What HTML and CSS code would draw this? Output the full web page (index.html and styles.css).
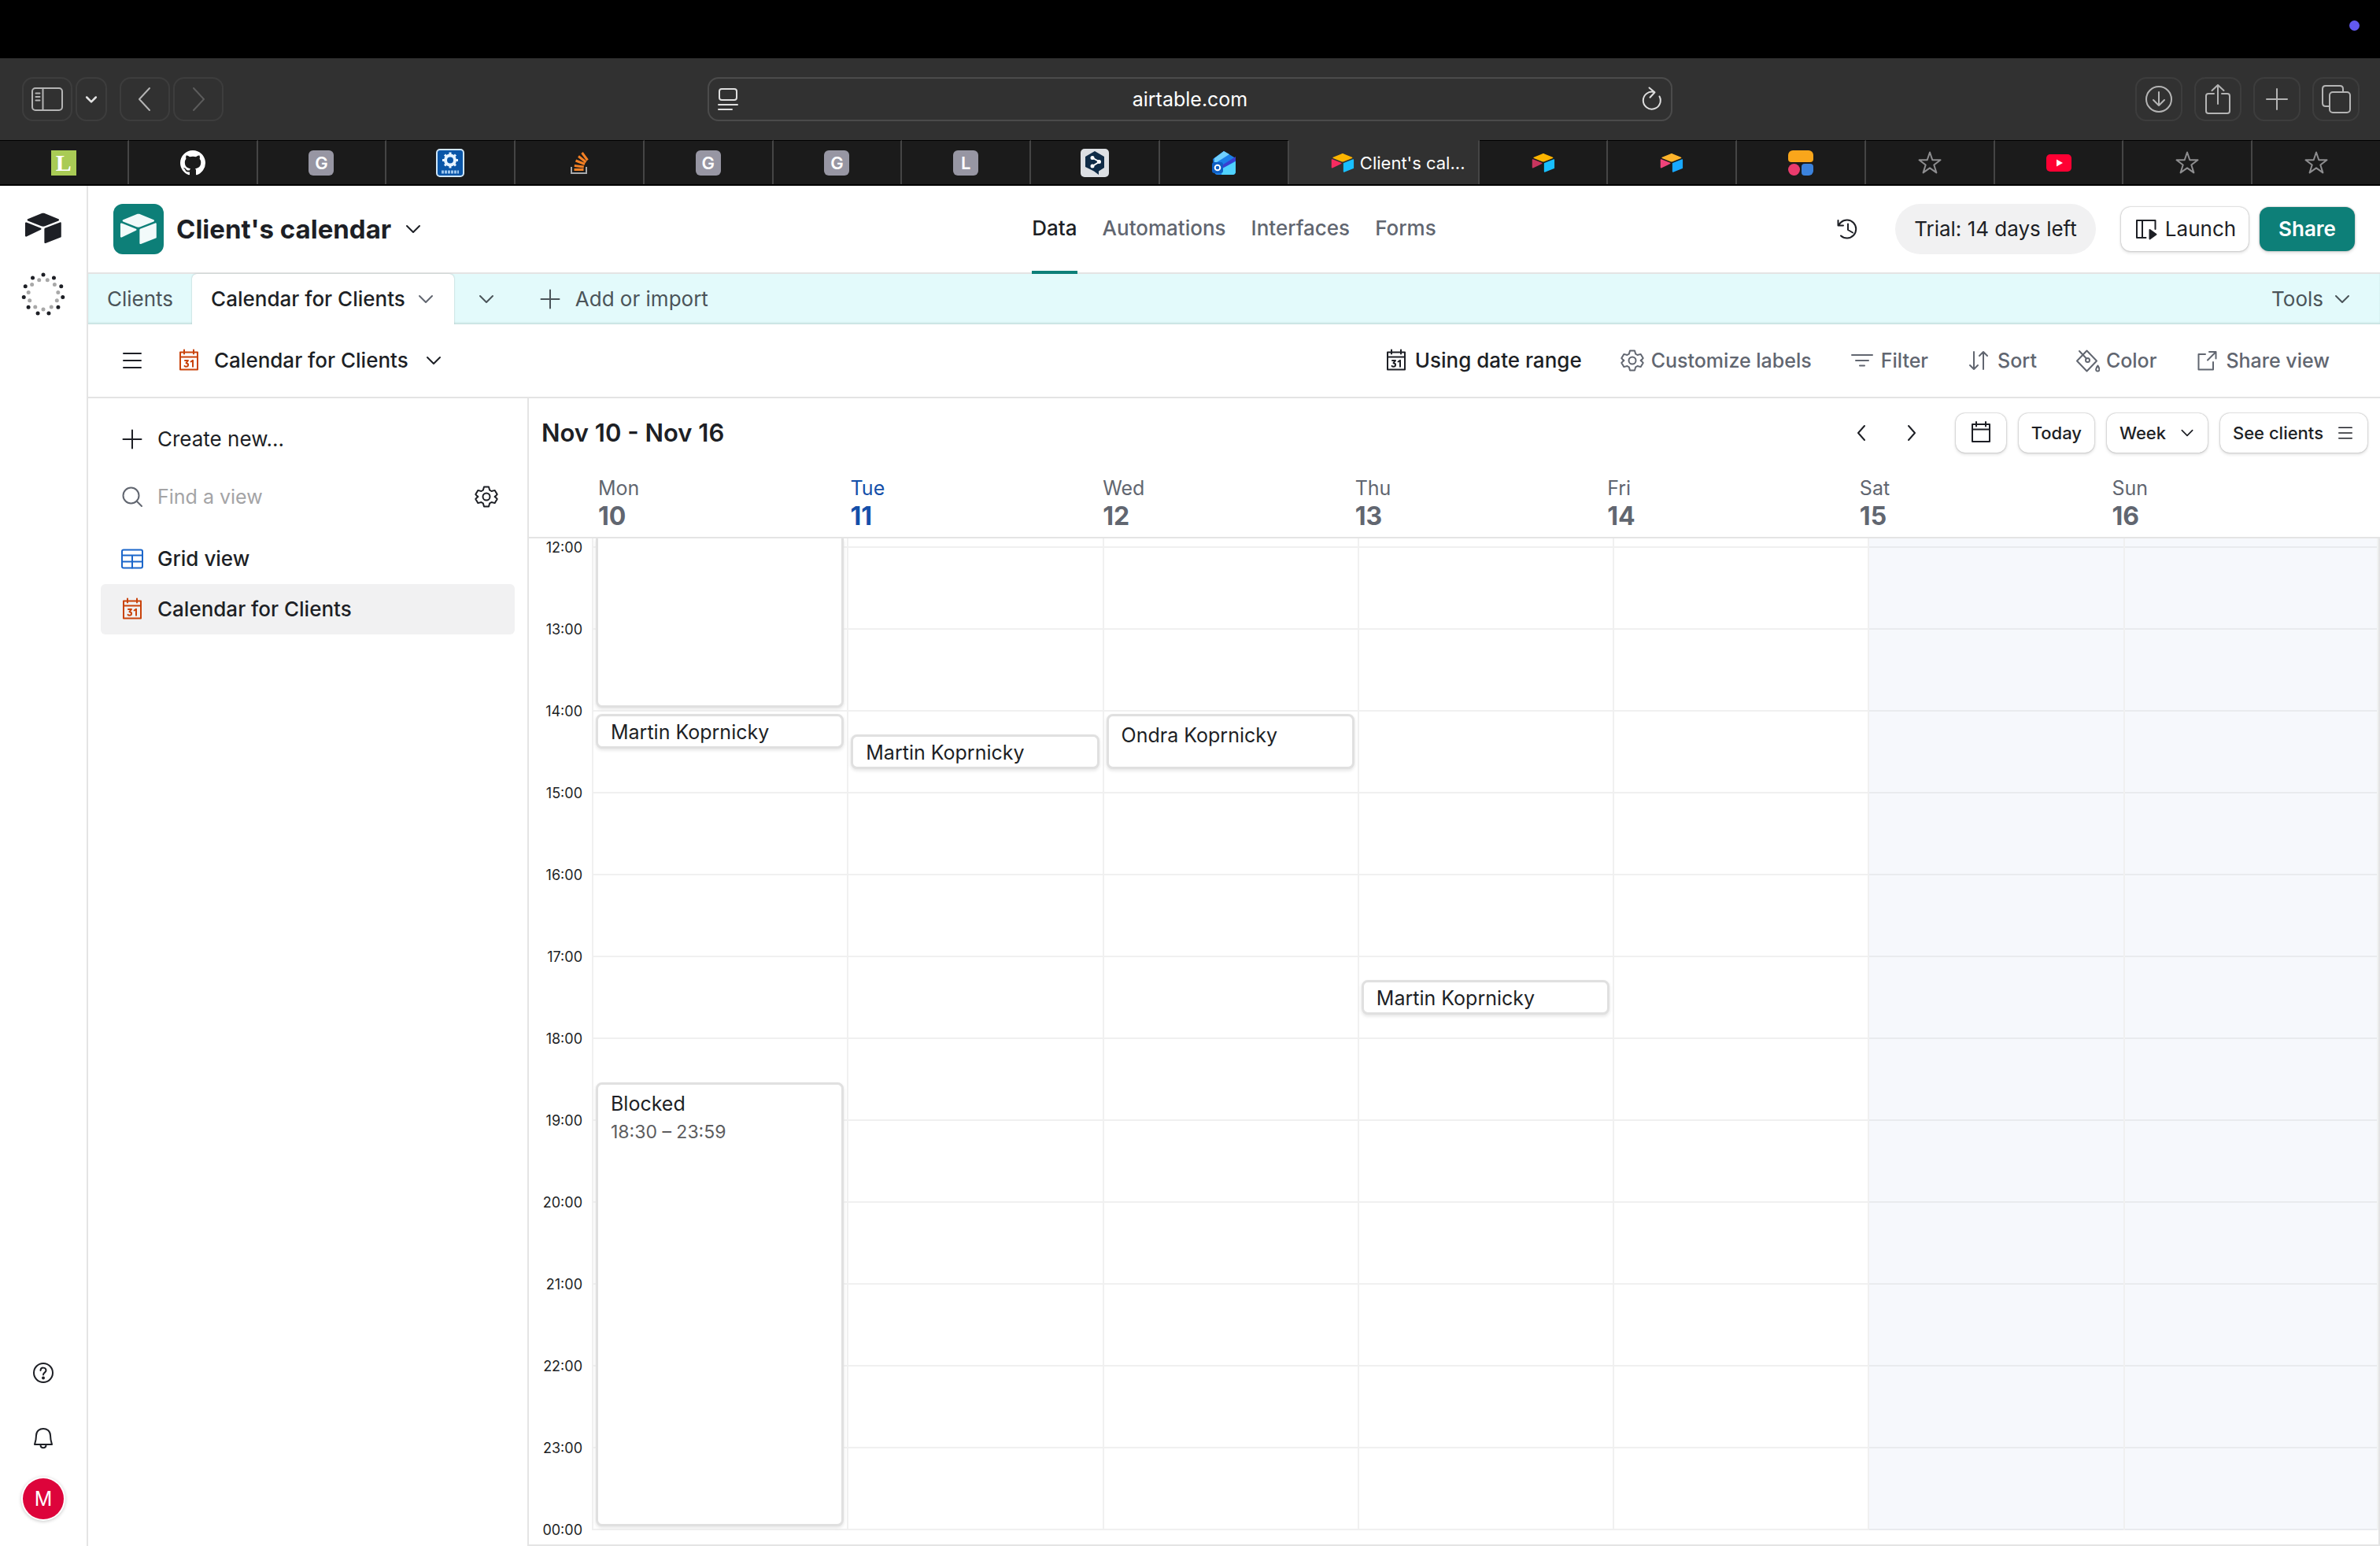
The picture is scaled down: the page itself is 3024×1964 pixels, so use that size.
FILE: index.html
```html
<!DOCTYPE html>
<html lang="en">

<head>
  <meta charset="utf-8">
  <title>Client's calendar: Calendar for Clients</title>
  <link rel="stylesheet" href="styles.css">
</head>

<body>

  <!-- icon set -->
  <svg class="sprite" aria-hidden="true">
    <symbol id="chevron-down" viewBox="0 0 24 24"><path d="M4 8l8 8 8-8"/></symbol>
    <symbol id="plus" viewBox="0 0 32 32"><path d="M16 4.500v23M4.500 16h23"/></symbol>
    <symbol id="menu" viewBox="0 0 32 32"><path d="M5 7h22M5 16h22M5 25h22"/></symbol>
    <symbol id="calendar-31" viewBox="0 0 32 32">
      <path d="M5 5.500h22v22H5zM5 11.500h22M10 2.500v5M22 2.500v5"/>
      <path d="M11 16h4l-2.500 3.200c3.600.2 3.200 4.600 0 4.600-.9 0-1.500-.3-2-.9M18.500 17.500l2.500-1.700v8"/>
    </symbol>
    <symbol id="calendar" viewBox="0 0 32 32"><path d="M5 5h22v22H5zM5 11.500h22M10 2v5.500M22 2v5.500"/></symbol>
    <symbol id="gear" viewBox="0 0 32 32">
      <circle cx="16" cy="16" r="4.500"/>
      <path d="M13 3.500h6l1.200 4.200 2.300 1.300 4.200-1.100 3 5.200-3 3.100v-.400l3 3.100-3 5.200-4.200-1.100-2.300 1.300-1.200 4.200h-6l-1.200-4.200-2.300-1.300-4.200 1.100-3-5.200 3-3.100v.400l-3-3.100 3-5.200 4.200 1.100 2.300-1.300z"/>
    </symbol>
    <symbol id="search" viewBox="0 0 32 32"><circle cx="14.500" cy="14.500" r="10"/><path d="M22 22l6 6"/></symbol>
    <symbol id="grid" viewBox="0 0 32 32"><rect x="3" y="4.500" width="26" height="23" rx="2"/><path d="M3 11.500h26M3 19.500h26M16 11.500v16"/></symbol>
    <symbol id="filter" viewBox="0 0 32 32"><path d="M3 9h26M8 16h16M13 22.500h6"/></symbol>
    <symbol id="sort" viewBox="0 0 32 32"><path d="M10 5v22M5 22l5 5 5-5M22 27V5M17 10l5-5 5 5"/></symbol>
    <symbol id="paint" viewBox="0 0 32 32">
      <path d="M15.500 3.500L28 16.500 15.500 29.500 3 16.500zM6 4l9 9.500"/>
      <circle cx="16.500" cy="15.500" r="2.500"/>
      <path d="M29.500 22.500c2 3 3 7-.200 7s-2.500-4 .200-7z"/>
    </symbol>
    <symbol id="share-out" viewBox="0 0 32 32"><path d="M14 8H5.500v19.500H24V18M19 5h8.500v8.500M27 5.500L17 15.500"/></symbol>
    <symbol id="history" viewBox="0 0 32 32"><path d="M7 24.500a11.500 11.500 0 1 0 0-17L3.500 11.500M3.500 5v6.500H10M16 9.500V17l6 3.500"/></symbol>
    <symbol id="launch" viewBox="0 0 32 32"><path d="M15.500 27H4V5h23.500v11M11 5v22"/><path class="solid" d="M20.500 17l8 5.700-8 5.800z"/></symbol>
    <symbol id="help" viewBox="0 0 32 32"><circle cx="16" cy="16" r="12"/><path d="M12.500 13c.2-4.600 7-4.400 7 0 0 2.600-3.500 2.700-3.500 5.500"/><circle class="solid" cx="16" cy="22.500" r="1"/></symbol>
    <symbol id="bell" viewBox="0 0 32 32"><path d="M7 12.500c.3-11.500 17.700-11.500 18 0 0 5 .8 7.500 2 11.500H5c1.200-4 2-6.500 2-11.500zM12.500 24.500c0 5 7 5 7 0"/></symbol>
    <symbol id="star" viewBox="0 0 32 32"><path d="M16 2.500l3.300 9.800h10.200l-8.200 6.200 3.100 9.900-8.400-6-8.400 6 3.100-9.900-8.200-6.200h10.200z"/></symbol>
    <symbol id="box-top" viewBox="0 0 200 170"><path d="M90 12.400L24 39.700c-3.600 1.500-3.600 6.700.1 8.200l66.300 26.200c5.800 2.300 12.300 2.300 18.100 0l66.200-26.200c3.700-1.500 3.700-6.700.1-8.200l-66-27.300c-6-2.500-12.700-2.500-18.800 0z"/></symbol>
    <symbol id="box-right" viewBox="0 0 200 170"><path d="M105.300 88.500v65.600c0 3.100 3.200 5.200 6.100 4.100l73.800-28.700c1.700-.6 2.800-2.300 2.800-4.100V59.800c0-3.100-3.200-5.200-6.100-4.100l-73.800 28.700c-1.700.6-2.800 2.300-2.800 4.100z"/></symbol>
    <symbol id="box-left" viewBox="0 0 200 170"><path d="M88.100 91.800l-24.100 11.700-46.300 22.200c-2.900 1.400-6.700-.8-6.700-4V60.100c0-1.200.6-2.200 1.500-3 1.400-1.300 3.400-1.800 5.100-1.100l70.100 27.800c3.600 1.400 3.900 6.400.4 8z"/></symbol>
  </svg>

  <!-- browser window -->
  <div class="menubar"><span class="recording"></span></div>

  <div class="browser">
    <div class="browser-group">
      <button class="chrome-btn" aria-label="Sidebar"><svg class="icon-lg" viewBox="0 0 40 32"><rect x="1" y="2" width="38" height="28" rx="4"/><path d="M14.500 2v28M5.500 8.500h5M5.500 13h5M5.500 17.500h5"/></svg></button>
      <button class="chrome-btn narrow" aria-label="Tab groups"><svg class="icon-xs bold" viewBox="0 0 24 24"><path d="M5 9l7 7 7-7"/></svg></button>
      <button class="chrome-btn spaced" aria-label="Back"><svg class="icon" viewBox="0 0 32 32"><path d="M22 2L9 16l13 14"/></svg></button>
      <button class="chrome-btn off" aria-label="Forward"><svg class="icon" viewBox="0 0 32 32"><path d="M10 2l13 14-13 14"/></svg></button>
    </div>
    <div class="address">
      <svg class="icon" viewBox="0 0 32 32"><rect x="5" y="3" width="22" height="14" rx="3"/><path d="M4 23h24M4 29h17"/></svg>
      <input type="text" value="airtable.com" aria-label="Address">
      <button aria-label="Reload"><svg class="icon" viewBox="0 0 32 32"><path d="M25.500 12.500a11 11 0 1 1-7-5.500M12.500 1.500l7 5.700-6 6.500"/></svg></button>
    </div>
    <div class="browser-group end">
      <button class="chrome-btn" aria-label="Downloads"><svg class="icon-lg" viewBox="0 0 40 36"><circle cx="20" cy="18" r="16"/><path d="M20 9v17M13 19l7 7 7-7"/></svg></button>
      <button class="chrome-btn" aria-label="Share page"><svg class="icon-lg" viewBox="0 0 40 40"><path d="M15 13H8c-2 0-3 1-3 3v19c0 2 1 3 3 3h24c2 0 3-1 3-3V16c0-2-1-3-3-3h-7M20 26V2M12.500 9L20 2l7.500 7"/></svg></button>
      <button class="chrome-btn" aria-label="New tab"><svg class="icon" viewBox="0 0 32 32"><path d="M16 3v26M3 16h26"/></svg></button>
      <button class="chrome-btn" aria-label="All tabs"><svg class="icon-lg" viewBox="0 0 40 40"><rect x="12" y="11" width="26" height="26" rx="4"/><path d="M12 29H7c-3 0-4-1-4-4V7c0-3 1-4 4-4h18c3 0 4 1 4 4v4"/></svg></button>
    </div>
  </div>

  <div class="tabstrip">
    <a href="#" class="tab"><span class="fav lime">L</span></a>
    <a href="#" class="tab"><svg class="fav" viewBox="0 0 16 16"><path fill="#fff" d="M8 0C3.580 0 0 3.580 0 8c0 3.540 2.290 6.530 5.470 7.590.4.070.55-.17.55-.38 0-.19-.01-.82-.01-1.490-2.010.37-2.530-.49-2.690-.94-.09-.23-.48-.94-.82-1.130-.28-.15-.68-.52-.01-.53.63-.01 1.080.58 1.230.82.72 1.210 1.870.87 2.330.66.07-.52.28-.87.51-1.070-1.780-.2-3.640-.89-3.640-3.950 0-.87.31-1.590.82-2.150-.08-.2-.36-1.020.08-2.120 0 0 .67-.21 2.200.82.64-.18 1.320-.27 2-.27s1.360.09 2 .27c1.530-1.040 2.200-.82 2.200-.82.44 1.100.16 1.920.08 2.120.51.56.82 1.270.82 2.150 0 3.070-1.870 3.750-3.650 3.950.29.25.54.73.54 1.480 0 1.070-.01 1.930-.01 2.200 0 .21.15.46.55.38A8.010 8.010 0 0 0 16 8c0-4.420-3.580-8-8-8z"/></svg></a>
    <a href="#" class="tab"><span class="fav">G</span></a>
    <a href="#" class="tab"><svg class="fav-lg" viewBox="0 0 36 36"><rect x="1" y="1" width="34" height="34" rx="4" fill="#0a56a8" stroke="#cfe6f8" stroke-width="2"/><circle cx="18" cy="14.500" r="6" fill="none" stroke="#e6f3ff" stroke-width="4"/><path stroke="#e6f3ff" stroke-width="3" d="M18 4.500v3M18 21.500v3M8 14.500h3M25 14.500h3M11 7.500l2 2M23 19.500l2 2M25 7.500l-2 2M13 19.500l-2 2"/><path stroke="#9cc6ee" stroke-width="4" stroke-dasharray="3 1" d="M7 29.500h22"/></svg></a>
    <a href="#" class="tab"><svg class="fav" viewBox="0 0 32 32" fill="none" stroke-width="3"><path stroke="#a7a9ac" stroke-width="2" d="M6 21v8h19v-8"/><path stroke="#f48024" d="M9.500 24.500h12M9.800 19.500l12 1.500M11.500 13l11.500 4.500M15 7.500l9.500 7.500M19.500 3l7 9.500"/></svg></a>
    <a href="#" class="tab"><span class="fav">G</span></a>
    <a href="#" class="tab"><span class="fav">G</span></a>
    <a href="#" class="tab"><span class="fav">L</span></a>
    <a href="#" class="tab"><svg class="fav-lg" viewBox="0 0 36 36"><rect width="36" height="36" rx="5" fill="#dcdfe3"/><path fill="#0f2b46" d="M18 3l12 7v14l-7 4.500V33l-6-4.500L6 23V10z"/><path stroke="#fff" stroke-width="2" d="M15 11.500l9 5-9 5.500" fill="none"/><g fill="#fff"><circle cx="15" cy="11.500" r="2.500"/><circle cx="23.500" cy="16.500" r="2.500"/><circle cx="15" cy="22" r="2.500"/></g></svg></a>
    <a href="#" class="tab"><svg class="fav" viewBox="0 0 32 32"><path fill="#1b7fe8" d="M2 11L16 1l15 9v17a4 4 0 0 1-4 4H8a4 4 0 0 1-4-4z"/><path fill="#6fd0ff" d="M4 10L16 1l7 4L4 17z"/><path fill="#3a3fd0" d="M12 20L31 8v5L14 24z"/><path fill="#4fd2ff" d="M14 23l17-9v13a4 4 0 0 1-4 4H13z"/><rect x="1" y="15" width="14" height="14" rx="3" fill="#0f5fc4"/><circle cx="8" cy="22" r="3.300" fill="none" stroke="#fff" stroke-width="2"/></svg></a>
    <a href="#" class="tab active"><svg class="fav"><use href="#box-top" fill="#fcb400"/><use href="#box-right" fill="#18bfff"/><use href="#box-left" fill="#f82b60"/></svg>Client's cal...</a>
    <a href="#" class="tab"><svg class="fav"><use href="#box-top" fill="#fcb400"/><use href="#box-right" fill="#18bfff"/><use href="#box-left" fill="#c8355e"/></svg></a>
    <a href="#" class="tab"><svg class="fav"><use href="#box-top" fill="#fdb32b"/><use href="#box-right" fill="#18a8ff"/><use href="#box-left" fill="#f0437a"/></svg></a>
    <a href="#" class="tab"><svg class="fav" viewBox="0 0 32 32"><rect width="32" height="15" rx="4" fill="#f9a61b"/><circle cx="7.500" cy="24.500" r="7.500" fill="#ea3b6d"/><rect x="17" y="17" width="15" height="15" rx="4" fill="#3b82dc"/></svg></a>
    <a href="#" class="tab"><svg class="icon faint"><use href="#star"/></svg></a>
    <a href="#" class="tab"><svg class="fav" viewBox="0 0 32 32"><rect y="5" width="32" height="22" rx="5" fill="#ff0033"/><path fill="#fff" d="M13 11.500v9l8-4.500z"/></svg></a>
    <a href="#" class="tab"><svg class="icon faint"><use href="#star"/></svg></a>
    <a href="#" class="tab"><svg class="icon faint"><use href="#star"/></svg></a>
  </div>

  <div class="app">

    <nav class="rail">
      <a href="#" class="home" aria-label="Home"><svg class="logo"><use href="#box-top"/><use href="#box-right"/><use href="#box-left"/></svg></a>
      <svg class="loader" viewBox="0 0 56 56">
        <circle class="dots" cx="28" cy="28" r="25" pathLength="110" transform="rotate(-90 28 28)"/>
        <circle class="dots inner" cx="28" cy="28" r="19" pathLength="110" transform="rotate(90 28 28)"/>
      </svg>
      <div class="rail-bottom">
        <button aria-label="Help"><svg class="icon"><use href="#help"/></svg></button>
        <button aria-label="Notifications"><svg class="icon"><use href="#bell"/></svg></button>
        <button class="avatar">M</button>
      </div>
    </nav>

    <main class="main">

      <header class="topbar">
        <div class="base">
          <span class="base-icon"><svg class="logo"><use href="#box-top"/><use href="#box-right"/><use href="#box-left"/></svg></span>
          <h1>Client's calendar</h1>
          <button aria-label="Base menu"><svg class="icon-sm"><use href="#chevron-down"/></svg></button>
        </div>
        <nav class="sections">
          <a href="#" class="current">Data</a>
          <a href="#">Automations</a>
          <a href="#">Interfaces</a>
          <a href="#">Forms</a>
        </nav>
        <div class="actions">
          <button class="history" aria-label="History"><svg class="icon"><use href="#history"/></svg></button>
          <button class="trial">Trial: 14 days left</button>
          <button class="launch"><svg class="icon"><use href="#launch"/></svg>Launch</button>
          <button class="share">Share</button>
        </div>
      </header>

      <div class="tables">
        <a href="#" class="table-tab">Clients</a>
        <a href="#" class="table-tab open">Calendar for Clients <svg class="icon-sm"><use href="#chevron-down"/></svg></a>
        <button class="all-tables" aria-label="All tables"><svg class="icon-sm"><use href="#chevron-down"/></svg></button>
        <button class="add-table"><svg class="icon"><use href="#plus"/></svg>Add or import</button>
        <button class="tools">Tools <svg class="icon-sm"><use href="#chevron-down"/></svg></button>
      </div>

      <div class="viewbar">
        <button aria-label="Toggle sidebar"><svg class="icon"><use href="#menu"/></svg></button>
        <button class="view-name"><svg class="icon orange"><use href="#calendar-31"/></svg><span>Calendar for Clients</span><svg class="icon-sm"><use href="#chevron-down"/></svg></button>
        <div class="view-tools">
          <button class="dark"><svg class="icon"><use href="#calendar-31"/></svg>Using date range</button>
          <button><svg class="icon"><use href="#gear"/></svg>Customize labels</button>
          <button><svg class="icon"><use href="#filter"/></svg>Filter</button>
          <button><svg class="icon"><use href="#sort"/></svg>Sort</button>
          <button><svg class="icon"><use href="#paint"/></svg>Color</button>
          <button><svg class="icon"><use href="#share-out"/></svg>Share view</button>
        </div>
      </div>

      <div class="content">

        <aside class="sidebar">
          <button class="row create"><svg class="icon"><use href="#plus"/></svg>Create new...</button>
          <div class="row find">
            <label for="find"><svg class="icon"><use href="#search"/></svg></label>
            <input type="text" id="find" placeholder="Find a view" aria-label="Find a view">
            <button aria-label="View settings"><svg class="icon"><use href="#gear"/></svg></button>
          </div>
          <a href="#" class="row view"><svg class="icon blue"><use href="#grid"/></svg>Grid view</a>
          <a href="#" class="row view selected"><svg class="icon orange"><use href="#calendar-31"/></svg>Calendar for Clients</a>
        </aside>

        <section class="calendar">
          <div class="cal-bar">
            <h2>Nov 10 - Nov 16</h2>
            <div class="arrows">
              <button aria-label="Previous week"><svg class="icon-sm" viewBox="0 0 24 24"><path d="M16 3l-8 9 8 9"/></svg></button>
              <button aria-label="Next week"><svg class="icon-sm" viewBox="0 0 24 24"><path d="M8 3l8 9-8 9"/></svg></button>
            </div>
            <button class="box" aria-label="Pick a date"><svg class="icon"><use href="#calendar"/></svg></button>
            <button class="box">Today</button>
            <div class="box select">
              <select aria-label="Range">
                <option>Day</option>
                <option selected>Week</option>
              </select>
              <svg class="icon-xs"><use href="#chevron-down"/></svg>
            </div>
            <button class="box">See clients <svg class="icon-sm"><use href="#menu"/></svg></button>
          </div>

          <div class="days">
            <div class="day">Mon <b>10</b></div>
            <div class="day today">Tue <b>11</b></div>
            <div class="day">Wed <b>12</b></div>
            <div class="day">Thu <b>13</b></div>
            <div class="day">Fri <b>14</b></div>
            <div class="day">Sat <b>15</b></div>
            <div class="day">Sun <b>16</b></div>
          </div>

          <div class="week">
            <div class="hours">
              <span>12:00</span>
              <span>13:00</span>
              <span>14:00</span>
              <span>15:00</span>
              <span>16:00</span>
              <span>17:00</span>
              <span>18:00</span>
              <span>19:00</span>
              <span>20:00</span>
              <span>21:00</span>
              <span>22:00</span>
              <span>23:00</span>
              <span>00:00</span>
            </div>
            <!-- row 2 is 12:00, one row for each quarter of an hour -->
            <div class="col">
              <div class="event cut" style="grid-row: 1 / 10"></div>
              <div class="event short" style="grid-row: 10 / 12">Martin Koprnicky</div>
              <div class="event" style="grid-row: 28 / 50">Blocked<small>18:30 – 23:59</small></div>
            </div>
            <div class="col">
              <div class="event short" style="grid-row: 11 / 13">Martin Koprnicky</div>
            </div>
            <div class="col">
              <div class="event" style="grid-row: 10 / 13">Ondra Koprnicky</div>
            </div>
            <div class="col">
              <div class="event short" style="grid-row: 23 / 25">Martin Koprnicky</div>
            </div>
            <div class="col"></div>
            <div class="col weekend"></div>
            <div class="col weekend"></div>
          </div>
        </section>

      </div>
    </main>
  </div>

</body>

</html>
```
FILE: styles.css
```css
* {
  box-sizing: border-box;
}

body {
  margin: 0;
  min-height: 100vh;
  display: flex;
  flex-direction: column;
  font-family: Inter, "Liberation Sans", sans-serif;
  font-size: 26px;
  line-height: 36px;
  color: #1d1f25;
  background: #fff;
}

button,
input,
select {
  font: inherit;
  color: inherit;
  background: none;
  border: none;
  padding: 0;
  margin: 0;
}

button {
  display: flex;
  align-items: center;
  justify-content: center;
  white-space: nowrap;
  cursor: pointer;
}

a {
  color: inherit;
  text-decoration: none;
}

h1,
h2 {
  margin: 0;
}

/* icons */

.sprite {
  display: none;
}

.icon,
.icon-sm,
.icon-xs,
.icon-lg {
  width: 32px;
  height: 32px;
  flex: none;
  fill: none;
  stroke: currentColor;
  stroke-width: 2;
  stroke-linecap: round;
  stroke-linejoin: round;
}

.icon-sm {
  width: 24px;
  height: 24px;
}

.icon-xs {
  width: 20px;
  height: 20px;
}

.icon-lg {
  width: 40px;
  height: 40px;
}

.solid {
  fill: currentColor;
}

.bold {
  stroke-width: 3;
}

.blue {
  color: #1b66ca;
}

.orange {
  color: #c9430b;
}

.faint {
  color: #8e8e90;
}

.logo {
  width: 52px;
  height: 44px;
  fill: currentColor;
}

/* browser window */

.menubar {
  height: 74px;
  padding: 0 26px;
  display: flex;
  align-items: center;
  justify-content: flex-end;
  background: #000;
}

.recording {
  width: 13px;
  height: 13px;
  margin-bottom: 10px;
  border-radius: 50%;
  background: #6259f0;
}

.browser {
  height: 104px;
  padding: 0 24px;
  display: grid;
  grid-template-columns: 5fr 7fr 5fr;
  align-items: center;
  background: #313131;
  color: #b4b4b4;
}

.browser-group {
  display: flex;
  gap: 4px;
  padding-left: 4px;
}

.browser-group.end {
  justify-content: flex-end;
  gap: 15px;
  padding-right: 2px;
}

.chrome-btn {
  width: 64px;
  height: 56px;
  border: 2px solid #3d3d3d;
  border-radius: 14px;
}

.end .chrome-btn {
  width: 60px;
}

.chrome-btn.narrow {
  width: 40px;
  color: #e4e4e4;
}

.chrome-btn.spaced {
  margin-left: 12px;
}

.chrome-btn.off {
  color: #5c5c5c;
}

.address {
  height: 56px;
  padding: 0 8px;
  display: flex;
  align-items: center;
  border: 2px solid #4b4b4b;
  border-radius: 14px;
  color: #dedede;
}

.address input {
  flex: 1;
  text-align: center;
  font-size: 25px;
  color: #fff;
}

.tabstrip {
  height: 58px;
  display: flex;
  background: #1b1b1b;
  border-bottom: 2px solid #000;
}

.tab {
  flex: 1;
  display: flex;
  align-items: center;
  justify-content: center;
  border-top: 1px solid #000;
  border-right: 2px solid #454545;
}

.tab:last-child {
  border-right: none;
}

.tab.active {
  flex: none;
  width: 242px;
  gap: 6px;
  padding-left: 36px;
  background: #313131;
  border-top-color: #313131;
  color: #fff;
  font-size: 22px;
}

.fav {
  width: 32px;
  height: 32px;
  border-radius: 6px;
  text-align: center;
  line-height: 32px;
  font-size: 22px;
  font-weight: 600;
  color: #fff;
}

span.fav {
  background: #9796a3;
}

.fav-lg {
  width: 36px;
  height: 36px;
}

.fav.lime {
  background: #a9cb55;
  border-radius: 0;
  font-family: "Liberation Serif", serif;
  font-size: 30px;
}

/* left rail */

.app {
  flex: 1;
  display: flex;
}

.rail {
  width: 112px;
  padding: 32px 0 34px;
  display: flex;
  flex-direction: column;
  align-items: center;
  gap: 34px;
  border-right: 2px solid #e4e4e4;
}

.home {
  height: 44px;
}

.loader {
  width: 56px;
  height: 56px;
}

.dots {
  fill: none;
  stroke: #1d1f25;
  stroke-width: 5;
  stroke-linecap: round;
  stroke-dasharray: 0 10;
}

.dots.inner {
  stroke: #a8a8a8;
}

.rail-bottom {
  margin-top: auto;
  display: flex;
  flex-direction: column;
  align-items: center;
  gap: 19px;
}

.rail-bottom button {
  width: 64px;
  height: 64px;
}

.rail-bottom .avatar {
  width: 52px;
  height: 52px;
  border-radius: 50%;
  background: #dd043b;
  color: #fff;
  font-size: 25px;
  box-shadow: 0 0 0 2px #fff, 0 1px 4px 2px #c8c8c8;
}

/* top bar */

.main {
  flex: 1;
  min-width: 0;
  display: flex;
  flex-direction: column;
}

.topbar {
  height: 112px;
  padding: 0 32px;
  display: grid;
  grid-template-columns: 1fr auto 1fr;
  align-items: center;
  border-bottom: 2px solid #e4e4e4;
}

.base {
  display: flex;
  align-items: center;
  gap: 16px;
}

.base-icon {
  width: 64px;
  height: 64px;
  display: flex;
  align-items: center;
  justify-content: center;
  border-radius: 12px;
  background: #0d7f78;
  color: #f2fafa;
}

.base h1 {
  font-size: 33px;
  font-weight: 700;
}

.sections {
  align-self: stretch;
  display: flex;
  gap: 32px;
  font-weight: 500;
  color: #616670;
}

.sections a {
  display: flex;
  align-items: center;
  margin-bottom: -2px;
  border-bottom: 4px solid transparent;
}

.sections .current {
  color: #1d1f25;
  border-bottom-color: #0d7f78;
}

.actions {
  display: flex;
  align-items: center;
  justify-content: flex-end;
}

.history {
  margin-right: 44px;
}

.trial {
  height: 64px;
  padding: 0 24px;
  margin-right: 32px;
  border-radius: 32px;
  background: #f1f1f2;
}

.launch,
.share {
  height: 56px;
  border-radius: 12px;
  box-shadow: 0 0 2px #9a9a9a, 0 2px 4px #dcdcdc;
}

.launch {
  gap: 8px;
  padding: 0 16px;
  margin-right: 14px;
}

.share {
  padding: 0 24px;
  background: #0d7f78;
  color: #fff;
  font-weight: 600;
}

/* table tabs */

.tables {
  height: 64px;
  display: flex;
  background: #e3fafb;
  box-shadow: inset 0 -2px 2px #c8e2e1;
  color: #4b5459;
}

.table-tab {
  padding: 0 24px;
  display: flex;
  align-items: center;
  gap: 14px;
}

.table-tab.open {
  background: #fff;
  color: #1d1f25;
  font-weight: 500;
  border-radius: 6px 6px 0 0;
  box-shadow: 0 0 2px #9fb5b4;
  clip-path: inset(-2px -2px 0);
}

.table-tab.open .icon-sm {
  color: #616670;
}

.all-tables {
  width: 82px;
}

.add-table {
  gap: 16px;
  margin-left: 24px;
}

.tools {
  gap: 12px;
  margin-left: auto;
  padding-right: 36px;
}

/* view bar */

.viewbar {
  height: 94px;
  padding: 0 64px 0 40px;
  display: flex;
  align-items: center;
  border-bottom: 2px solid #e4e4e4;
}

.view-name {
  gap: 16px;
  margin-left: 40px;
  font-weight: 500;
}

.view-name span {
  padding-right: 4px;
}

.view-tools {
  margin-left: auto;
  display: flex;
  gap: 48px;
  font-size: 25px;
  font-weight: 500;
  color: #616670;
}

.view-tools button {
  gap: 8px;
}

.view-tools .dark {
  font-size: 26px;
  color: #1d1f25;
}

/* sidebar */

.content {
  flex: 1;
  display: flex;
}

.sidebar {
  width: 560px;
  padding: 16px;
  border-right: 2px solid #e4e4e4;
}

.row {
  width: 100%;
  height: 64px;
  padding: 0 20px 0 24px;
  display: flex;
  align-items: center;
  justify-content: flex-start;
  gap: 16px;
  border-radius: 6px;
}

.create {
  height: 72px;
}

.find {
  height: 74px;
  margin-bottom: 10px;
}

.find label {
  display: flex;
  color: #616670;
}

.find input {
  flex: 1;
  min-width: 0;
  font-size: 25px;
}

.find input::placeholder {
  color: #a4a4a6;
}

.view {
  font-weight: 500;
}

.selected {
  background: #f1f1f2;
}

/* calendar */

.calendar {
  flex: 1;
  display: flex;
  flex-direction: column;
  border-bottom: 2px solid #e4e4e4;
}

.cal-bar {
  height: 88px;
  padding: 0 16px;
  display: flex;
  align-items: center;
  gap: 16px;
  font-size: 22px;
  font-weight: 500;
}

.cal-bar h2 {
  flex: 1;
  font-size: 31px;
  font-weight: 600;
}

.arrows {
  display: flex;
  padding-right: 8px;
}

.arrows button {
  width: 64px;
  height: 50px;
}

.box {
  height: 50px;
  padding: 0 16px;
  gap: 16px;
  border-radius: 12px;
  box-shadow: 0 0 2px #9a9a9a, 0 2px 4px #dcdcdc;
}

.select {
  display: flex;
  align-items: center;
}

.select select {
  appearance: none;
  height: 50px;
  padding-right: 38px;
  margin-right: -38px;
}

.select svg {
  pointer-events: none;
}

.days {
  height: 90px;
  padding: 8px 28px 0 80px;
  display: grid;
  grid-template-columns: repeat(7, 1fr);
  border-bottom: 2px solid #e4e4e4;
  color: #616670;
}

.day {
  padding-left: 8px;
  font-size: 25px;
}

.day b {
  display: block;
  font-size: 32px;
  font-weight: 700;
}

.today {
  color: #144fa9;
}

.week {
  flex: 1;
  display: grid;
  grid-template-columns: 80px repeat(7, 1fr);
  align-items: start;
  border-right: 2px solid #e4e4e4;
}

.hours {
  padding: 2px 12px 0 0;
  text-align: right;
  font-size: 18px;
  line-height: 20px;
}

.hours span {
  display: block;
  height: 104px;
}

.hours span:last-child {
  height: 20px;
}

.col {
  display: grid;
  grid-template-rows: 10px repeat(48, 26px) 2px;
  border-left: 2px solid #f0f0f0;
  background: linear-gradient(#f0f0f0 2px, transparent 2px) 0 10px / 100% 104px;
}

.col:last-child {
  border-right: 2px solid #f0f2f2;
}

.weekend {
  background-color: #f6f8fc;
  background-image: linear-gradient(#e9ebee 2px, transparent 2px);
}

.event {
  margin: 5px 4px 3px 3px;
  padding: 6px 16px;
  display: flex;
  flex-direction: column;
  border: 3px solid #e0e0e0;
  border-radius: 8px;
  background: #fff;
  box-shadow: 0 2px 4px #e4e4e4;
  font-size: 25px;
  white-space: nowrap;
}

.event.short {
  padding: 2px 16px;
}

.event.cut {
  margin-top: 0;
  border-top: none;
  border-radius: 0 0 8px 8px;
}

.event small {
  font-size: 23px;
  color: #5c5c5e;
}
```
